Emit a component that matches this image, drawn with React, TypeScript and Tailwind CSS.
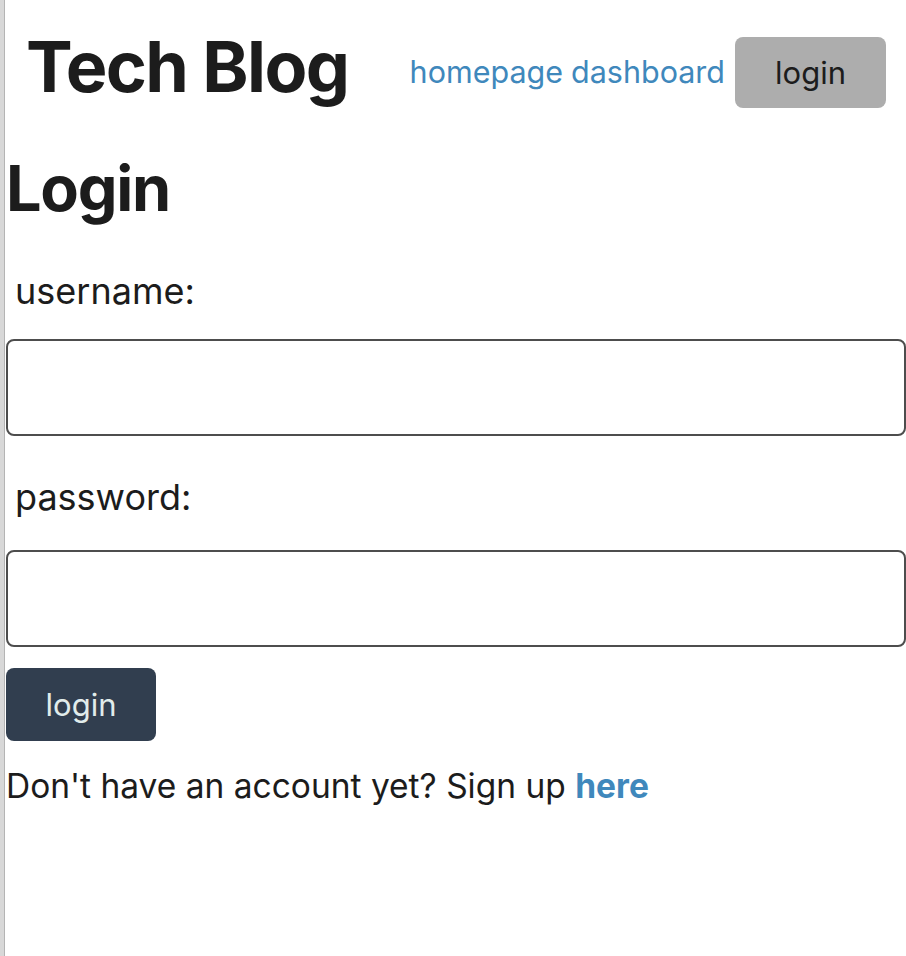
export default function App() {
  return (
    <div className="flex min-h-screen bg-white text-[#1c1c1c] font-['Inter','Liberation_Sans',sans-serif]">
      <div className="w-[5px] shrink-0 bg-[#d8d8d8] border-r border-[#b4b4b4]" />
      <main className="flex-1 pl-px">
        <header className="flex items-start pr-[20px]">
          <h1 className="mt-[32px] pl-[20px] text-[70px] font-bold leading-none tracking-[-1.6px]">Tech Blog</h1>
          <nav className="ml-auto mt-[37px] flex items-center gap-[10px]">
            <div className="text-[30.5px] leading-none text-[#3f88bc] flex gap-[8px]">
              <a href="#">homepage</a>
              <a href="#">dashboard</a>
            </div>
            <button className="w-[151px] h-[71px] rounded-lg bg-[#adadad] text-[31px] leading-none text-[#1c1c1c]">
              login
            </button>
          </nav>
        </header>

        <h2 className="mt-[49px] text-[63px] font-bold leading-none tracking-[-1.3px]">Login</h2>

        <form className="flex flex-col" onSubmit={(e) => e.preventDefault()}>
          <label className="mt-[53px] pl-[9px] text-[36px] leading-none">username:</label>
          <input className="mt-[30px] h-[97px] w-full rounded-lg border-2 border-[#4d4d4d]" />
          <label className="mt-[43px] pl-[9px] text-[36px] leading-none">password:</label>
          <input type="password" className="mt-[35px] h-[97px] w-full rounded-lg border-2 border-[#4d4d4d]" />
          <button className="mt-[21px] w-[150px] h-[73px] rounded-lg bg-[#313e4f] text-[31px] leading-none text-[#e1eceb]">
            login
          </button>
        </form>

        <p className="mt-[29px] text-[33.5px] leading-none">
          Don't have an account yet? Sign up{' '}
          <a href="#" className="font-bold text-[#3f88bc]">
            here
          </a>
        </p>
      </main>
    </div>
  )
}
